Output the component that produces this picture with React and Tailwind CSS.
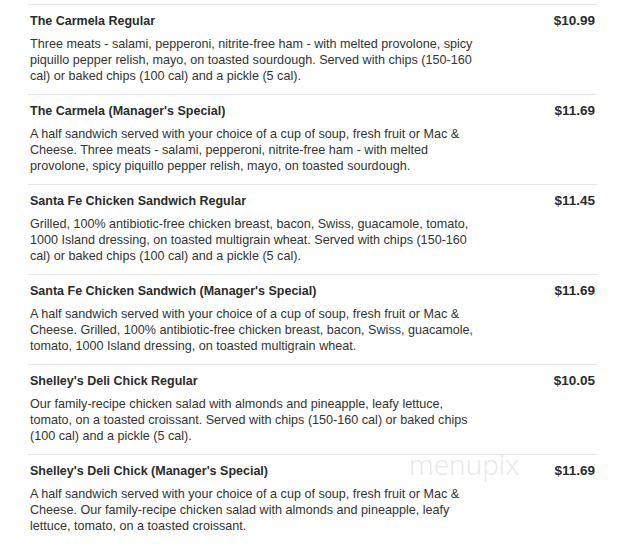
const items = [
  {
    title: "The Carmela Regular",
    price: "$10.99",
    lines: [
      "Three meats - salami, pepperoni, nitrite-free ham - with melted provolone, spicy",
      "piquillo pepper relish, mayo, on toasted sourdough. Served with chips (150-160",
      "cal) or baked chips (100 cal) and a pickle (5 cal).",
    ],
  },
  {
    title: "The Carmela (Manager's Special)",
    price: "$11.69",
    lines: [
      "A half sandwich served with your choice of a cup of soup, fresh fruit or Mac &",
      "Cheese. Three meats - salami, pepperoni, nitrite-free ham - with melted",
      "provolone, spicy piquillo pepper relish, mayo, on toasted sourdough.",
    ],
  },
  {
    title: "Santa Fe Chicken Sandwich Regular",
    price: "$11.45",
    lines: [
      "Grilled, 100% antibiotic-free chicken breast, bacon, Swiss, guacamole, tomato,",
      "1000 Island dressing, on toasted multigrain wheat. Served with chips (150-160",
      "cal) or baked chips (100 cal) and a pickle (5 cal).",
    ],
  },
  {
    title: "Santa Fe Chicken Sandwich (Manager's Special)",
    price: "$11.69",
    lines: [
      "A half sandwich served with your choice of a cup of soup, fresh fruit or Mac &",
      "Cheese. Grilled, 100% antibiotic-free chicken breast, bacon, Swiss, guacamole,",
      "tomato, 1000 Island dressing, on toasted multigrain wheat.",
    ],
  },
  {
    title: "Shelley's Deli Chick Regular",
    price: "$10.05",
    lines: [
      "Our family-recipe chicken salad with almonds and pineapple, leafy lettuce,",
      "tomato, on a toasted croissant. Served with chips (150-160 cal) or baked chips",
      "(100 cal) and a pickle (5 cal).",
    ],
  },
  {
    title: "Shelley's Deli Chick (Manager's Special)",
    price: "$11.69",
    lines: [
      "A half sandwich served with your choice of a cup of soup, fresh fruit or Mac &",
      "Cheese. Our family-recipe chicken salad with almonds and pineapple, leafy",
      "lettuce, tomato, on a toasted croissant.",
    ],
  },
];

export default function App() {
  return (
    <div
      className="relative w-[643px] h-[544px] overflow-hidden bg-white pt-[4px] pl-[28px]"
      style={{ fontFamily: '"Liberation Sans", Arial, sans-serif' }}
    >
      <div className="w-[569px]">
        {items.map((it, i) => (
          <div key={i} className="h-[90px] border-t border-[#e6e6e6] pt-[8px] pl-[2px] pr-[2px]">
            <div className="flex justify-between items-center h-[16px] font-bold text-[#2b2b2b]">
              <span className="text-[12.5px] leading-[16px]">{it.title}</span>
              <span className="text-[13.5px] leading-[16px]">{it.price}</span>
            </div>
            <div className="mt-[7px] text-[12.6px] leading-[16px] text-[#333]">
              {it.lines.map((l, j) => (
                <div key={j} className="whitespace-nowrap">{l}</div>
              ))}
            </div>
          </div>
        ))}
      </div>
      <div
        className="absolute left-[409px] top-[449px] text-[28px] leading-[30px] text-[#e8e8e8]"
        style={{ fontFamily: '"Open Sans", sans-serif', fontWeight: 300 }}
      >
        menupix
      </div>
    </div>
  );
}
